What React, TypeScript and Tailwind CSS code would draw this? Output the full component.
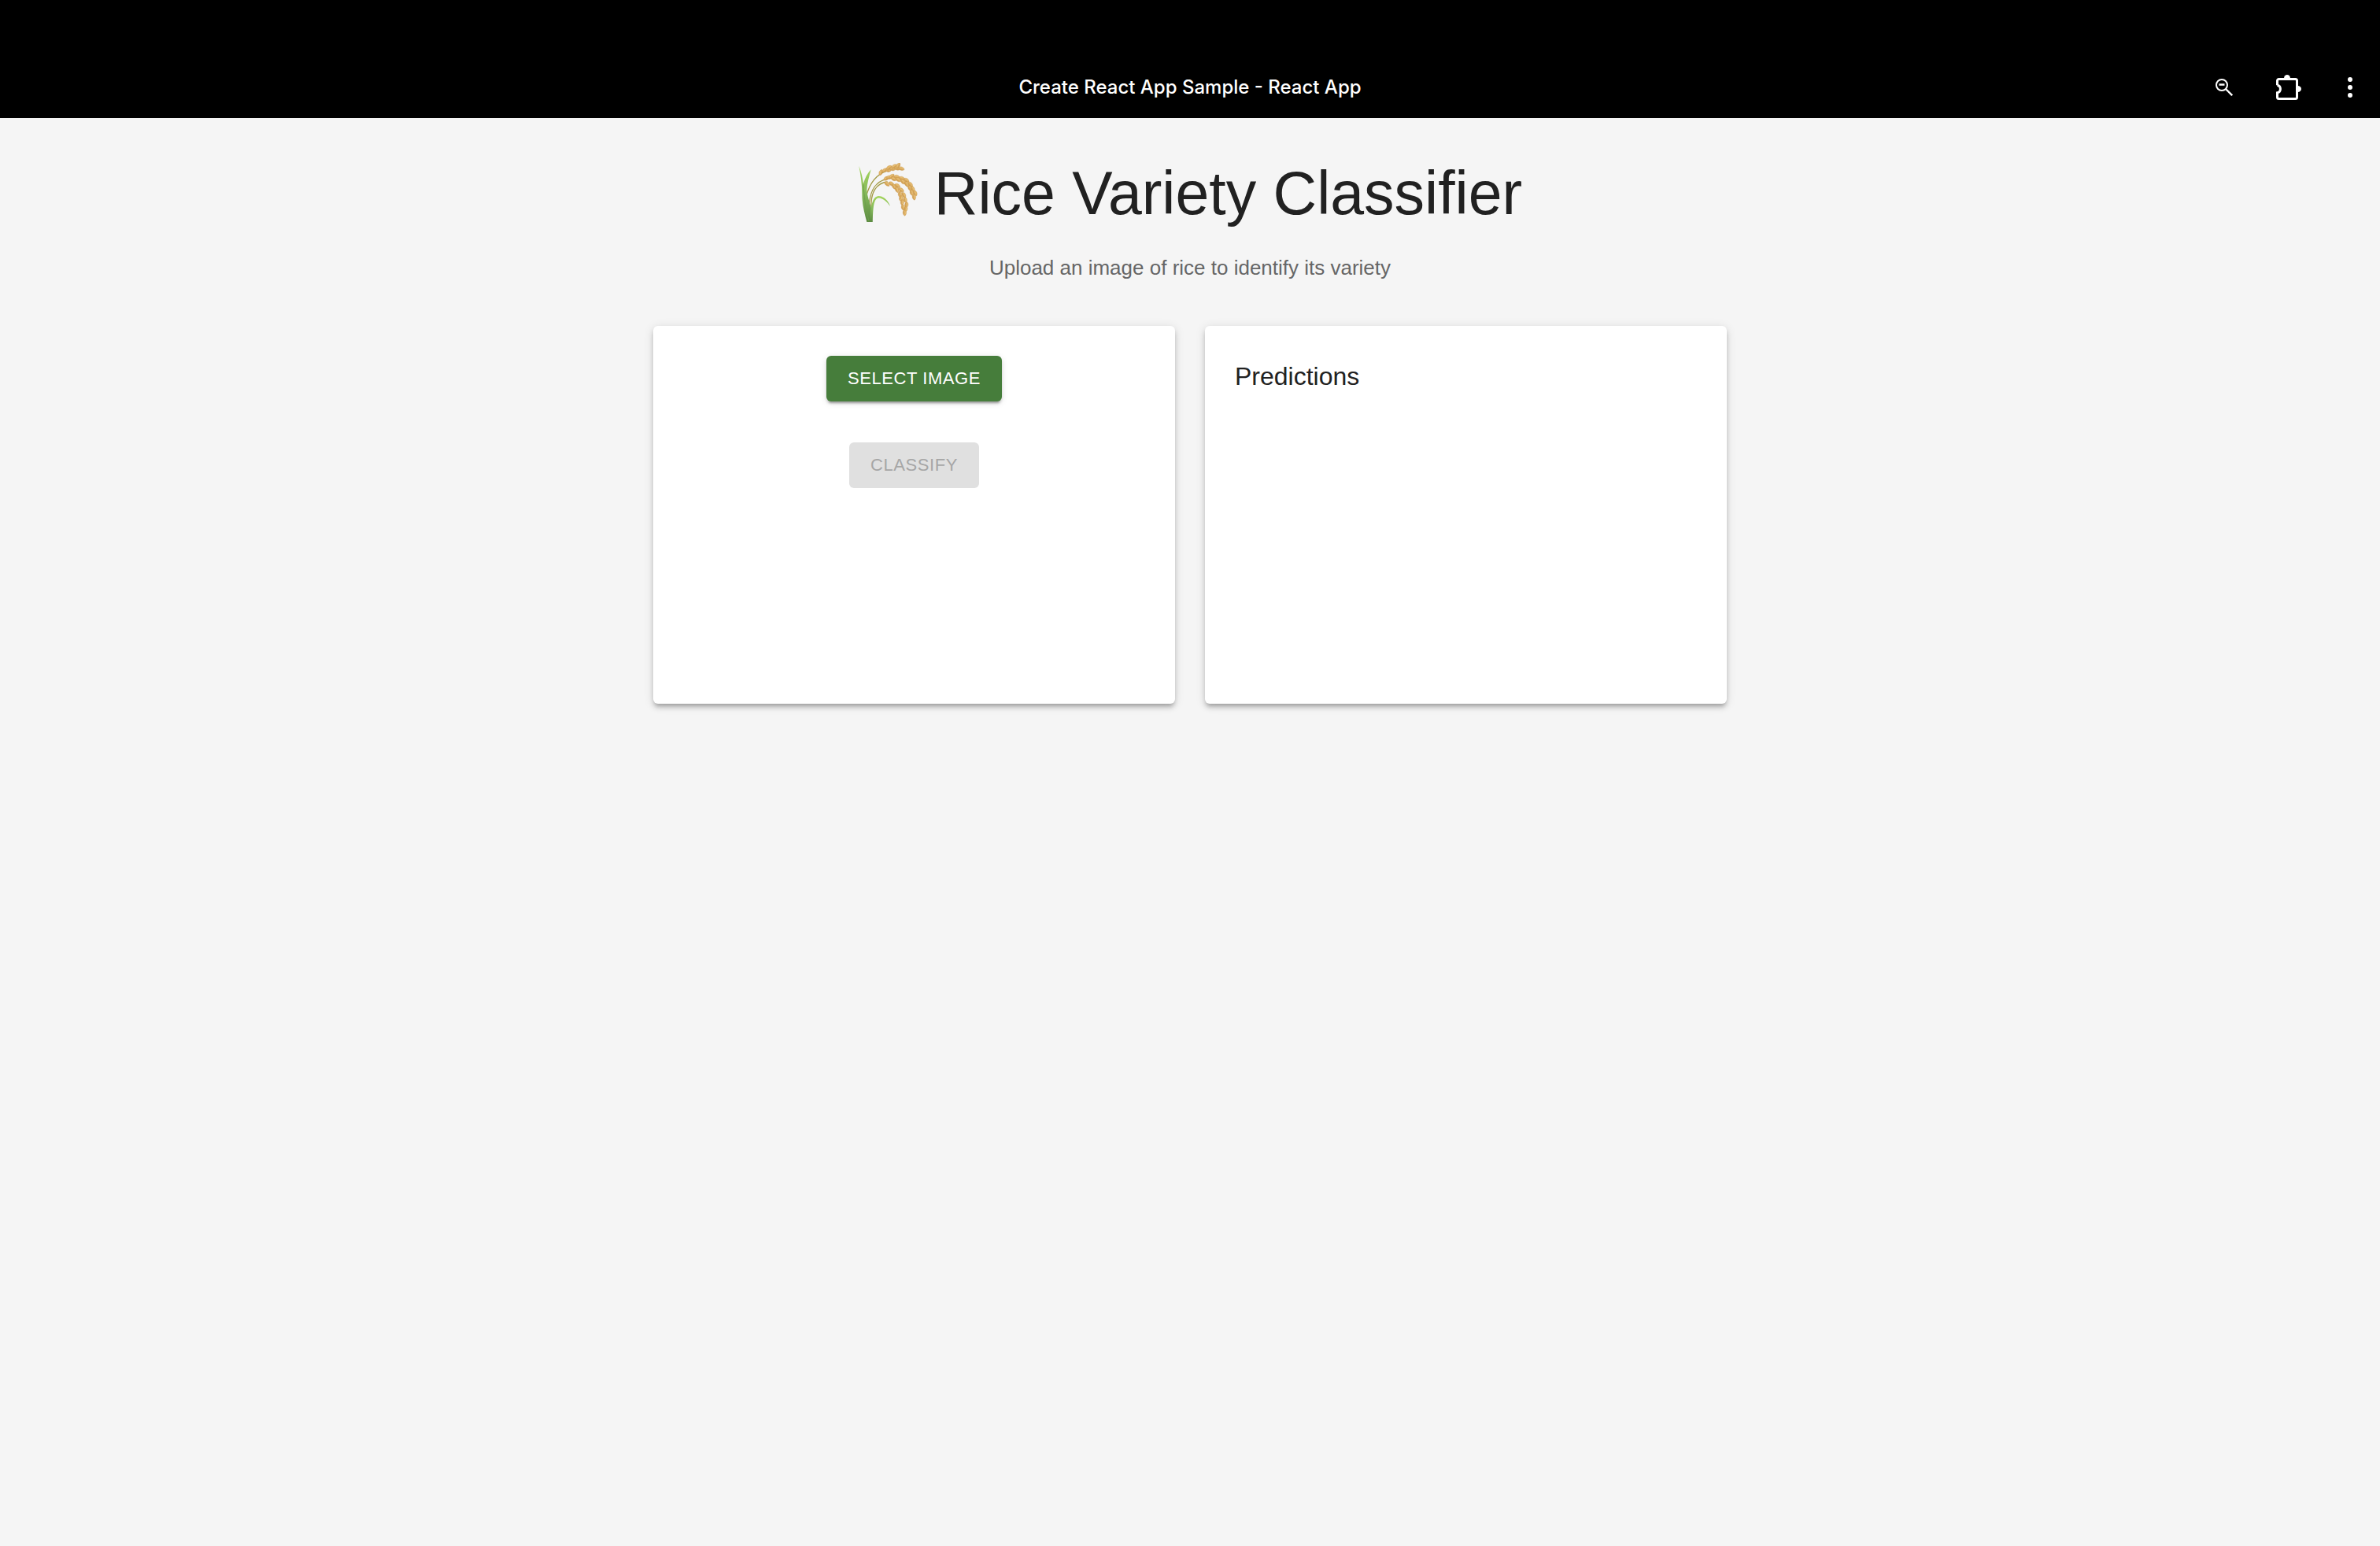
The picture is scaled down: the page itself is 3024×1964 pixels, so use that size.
type Grain = [x: number, y: number, angle: number];

const upperGrains: Grain[] = [
  [121, 84, -70], [136, 76, -35], [148, 76, 5], [152, 66, -35], [165, 71, 10],
  [172, 61, -35], [183, 69, 15], [187, 58, -60], [199, 70, 15],
];

const middleGrains: Grain[] = [
  [142, 107, -30], [153, 103, -10], [162, 99, -40], [170, 109, 20], [181, 101, 5],
  [187, 112, 30], [201, 107, 15], [205, 120, 45], [218, 114, 30], [219, 129, 55],
  [233, 130, 45], [231, 144, 65], [242, 147, 60], [238, 161, 75], [251, 163, 60],
  [247, 178, 80],
];

const lowerGrains: Grain[] = [
  [144, 128, 40], [161, 128, 35], [171, 138, 60], [184, 135, 30], [182, 150, 70],
  [198, 151, 30], [193, 166, 95], [208, 170, 60], [197, 182, 100], [213, 188, 70],
  [202, 198, 95], [218, 208, 95], [205, 217, 80], [215, 224, 100], [211, 238, 85],
];

function Grains({ items }: { items: Grain[] }) {
  return (
    <>
      {items.map(([x, y, angle]) => (
        <g key={`${x}-${y}`} transform={`translate(${x} ${y}) rotate(${angle})`}>
          <path
            d="M-12 0C-8-9 5-10 12 0C6 9-7 8-12 0Z"
            fill="url(#grain)"
            stroke="#c08a3c"
            strokeWidth="0.8"
          />
          <path d="M-6-1C-2-3 3-3 7 0" fill="none" stroke="#efcf8b" strokeWidth="1.6" />
        </g>
      ))}
    </>
  );
}

function RiceIcon() {
  return (
    <svg viewBox="33 48 231 231" className="size-[77px] shrink-0" role="img" aria-label="Rice">
      <defs>
        <linearGradient id="grain" x1="0" y1="0" x2="0" y2="1">
          <stop offset="0" stopColor="#e6bc70" />
          <stop offset="1" stopColor="#cf9c50" />
        </linearGradient>
        <linearGradient id="leaf" x1="0" y1="0" x2="0" y2="1">
          <stop offset="0" stopColor="#a5d65c" />
          <stop offset="0.5" stopColor="#84b85a" />
          <stop offset="1" stopColor="#5b8a41" />
        </linearGradient>
      </defs>
      <g fill="none" stroke="#a39a45" strokeWidth="4">
        <path d="M66 170C76 135 96 96 140 79" />
        <path d="M76 205C80 160 94 122 140 110" />
        <path d="M84 215C82 165 100 124 146 120" />
      </g>
      <path d="M37 59C46 80 51 105 54 127C60 106 69 88 83 73C76 100 68 125 67 152C70 180 80 205 88 232L88 273L67 273C57 235 49 205 49 165C49 130 44 95 37 59Z" fill="url(#leaf)" />
      <path d="M77 273C80 230 84 176 112 174C132 174 149 192 156 213C141 192 124 180 109 182C91 187 91 230 89 273Z" fill="url(#leaf)" />
      <path d="M54 130C56 170 62 220 75 270" fill="none" stroke="#6e9f4d" strokeWidth="3" />
      <Grains items={upperGrains} />
      <Grains items={middleGrains} />
      <Grains items={lowerGrains} />
    </svg>
  );
}

function ZoomOutIcon() {
  return (
    <svg viewBox="0 0 22 22" className="size-[22px]" fill="none" stroke="white" strokeWidth="2" aria-hidden="true">
      <circle cx="8" cy="8" r="7" />
      <path d="M4.500 7.500H11.500" strokeWidth="2.500" />
      <path d="M13 13L21.200 21.200" strokeWidth="2.400" />
    </svg>
  );
}

function ExtensionsIcon() {
  return (
    <svg viewBox="0 0 32 32" className="size-8" aria-hidden="true">
      <path
        d="M1.500 13.200V7.500A2 2 0 0 1 3.500 5.500H24.500A2 2 0 0 1 26.500 7.500V28.500A2 2 0 0 1 24.500 30.500H3.500A2 2 0 0 1 1.500 28.500V22.800A4.900 4.900 0 0 0 1.500 13.200"
        fill="none"
        stroke="white"
        strokeWidth="3"
      />
      <path d="M10 4.500A4 4.500 0 0 1 18 4.500Z" fill="white" />
      <path d="M27.500 14A4.500 4 0 0 1 27.500 22Z" fill="white" />
    </svg>
  );
}

function MenuIcon() {
  return (
    <svg viewBox="0 0 6 26" className="h-[26px] w-[6px]" fill="white" aria-hidden="true">
      <circle cx="3" cy="3" r="3" />
      <circle cx="3" cy="13" r="3" />
      <circle cx="3" cy="23" r="3" />
    </svg>
  );
}

function TitleBar() {
  return (
    <header className="grid grid-cols-[1fr_auto_1fr] items-center bg-black pt-[72px] text-white">
      <h2 className="col-start-2 py-5 font-['Inter',sans-serif] text-2xl leading-[38px] font-medium">
        Create React App Sample - React App
      </h2>
      <div className="flex items-center justify-end pr-[35px]">
        <button type="button" aria-label="Zoom" className="mr-[55px]">
          <ZoomOutIcon />
        </button>
        <button type="button" aria-label="Extensions" className="mr-[59px]">
          <ExtensionsIcon />
        </button>
        <button type="button" aria-label="Menu">
          <MenuIcon />
        </button>
      </div>
    </header>
  );
}

const cardClass =
  "min-h-[480px] rounded-[6px] bg-white p-[38px] shadow-[0_5px_5px_-3px_rgba(0,0,0,0.2),0_5px_6px_rgba(0,0,0,0.14),0_2px_13px_rgba(0,0,0,0.12)]";

const buttonClass =
  "rounded-[6px] px-[27px] py-[10px] text-[22px] leading-[38px] tracking-wide uppercase";

export default function App() {
  return (
    <div className="min-h-screen bg-[#f5f5f5] font-['Liberation_Sans',Arial,sans-serif] text-[#212121]">
      <TitleBar />
      <main className="mx-auto max-w-[1364px] pt-[50px]">
        <h1 className="flex items-center justify-center gap-5 text-[77px] leading-[90px]">
          <RiceIcon />
          Rice Variety Classifier
        </h1>
        <p className="mt-[31px] text-center text-[26px] leading-[38px] text-[#666666]">
          Upload an image of rice to identify its variety
        </p>
        <div className="mt-[55px] grid grid-cols-2 gap-[38px]">
          <section className={`${cardClass} flex flex-col items-center gap-[52px]`}>
            <button
              type="button"
              className={`${buttonClass} bg-[#467d3b] text-white shadow-[0_5px_2px_-3px_rgba(0,0,0,0.2),0_3px_3px_rgba(0,0,0,0.14),0_2px_8px_rgba(0,0,0,0.12)]`}
            >
              Select Image
            </button>
            <button type="button" disabled className={`${buttonClass} bg-[#e0e0e0] text-[#a6a6a6]`}>
              Classify
            </button>
          </section>
          <section className={cardClass}>
            <h2 className="text-[32px] leading-[52px]">Predictions</h2>
          </section>
        </div>
      </main>
    </div>
  );
}
